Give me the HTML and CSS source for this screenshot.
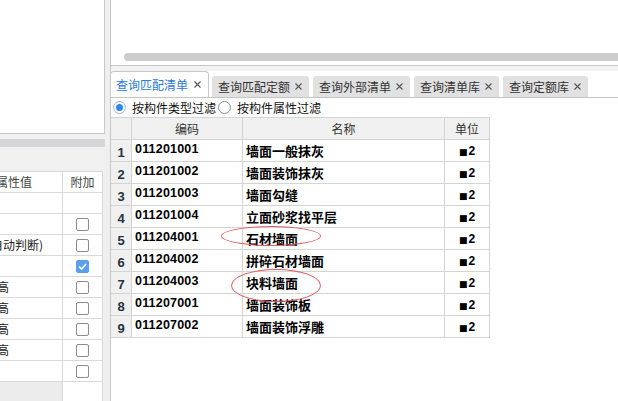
FILE: index.html
```html
<!DOCTYPE html>
<html lang="zh-CN">
<head>
<meta charset="utf-8">
<title>查询匹配清单</title>
<link rel="stylesheet" href="styles.css">
</head>
<body>
<div class="app">
  <div class="left">
    <div class="left-top"></div>
    <div class="left-gap"></div>
    <div class="left-bar"></div>
    <div class="left-space"></div>
    <div class="prop">
      <div class="pc ph"><span class="off-a">属性值</span></div>
      <div class="pc ph c2">附加</div>

      <div class="pc"></div><div class="pc"></div>

      <div class="pc"></div><div class="pc chk"><span class="box"></span></div>

      <div class="pc"><span class="off-b">(自动判断)</span></div><div class="pc chk"><span class="box"></span></div>

      <div class="pc"></div><div class="pc chk"><span class="box on"><svg width="9" height="7" viewBox="0 0 9 7"><path d="M1 3.5 L3.5 6 L8 1" fill="none" stroke="#fff" stroke-width="1.6"/></svg></span></div>

      <div class="pc"><span class="off-c">层高</span></div><div class="pc chk"><span class="box"></span></div>
      <div class="pc"><span class="off-c">层高</span></div><div class="pc chk"><span class="box"></span></div>
      <div class="pc"><span class="off-c">层高</span></div><div class="pc chk"><span class="box"></span></div>
      <div class="pc"><span class="off-c">层高</span></div><div class="pc chk"><span class="box"></span></div>

      <div class="pc"></div><div class="pc chk"><span class="box"></span></div>

      <div class="pc pf1"></div><div class="pc pf2"></div>
    </div>
  </div>

  <div class="splitter"></div>

  <div class="right">
    <div class="rtop"><div class="hscroll"></div></div>
    <div class="band"></div>
    <div class="tabs">
      <div class="tab active"><span>查询匹配清单</span><svg class="x" width="7" height="7" viewBox="0 0 7 7"><path d="M0.5 0.5 L6.5 6.5 M6.5 0.5 L0.5 6.5" stroke="#555" stroke-width="1.1"/></svg></div>
      <div class="tab"><span>查询匹配定额</span><svg class="x" width="7" height="7" viewBox="0 0 7 7"><path d="M0.5 0.5 L6.5 6.5 M6.5 0.5 L0.5 6.5" stroke="#555" stroke-width="1.1"/></svg></div>
      <div class="tab"><span>查询外部清单</span><svg class="x" width="7" height="7" viewBox="0 0 7 7"><path d="M0.5 0.5 L6.5 6.5 M6.5 0.5 L0.5 6.5" stroke="#555" stroke-width="1.1"/></svg></div>
      <div class="tab"><span>查询清单库</span><svg class="x" width="7" height="7" viewBox="0 0 7 7"><path d="M0.5 0.5 L6.5 6.5 M6.5 0.5 L0.5 6.5" stroke="#555" stroke-width="1.1"/></svg></div>
      <div class="tab"><span>查询定额库</span><svg class="x" width="7" height="7" viewBox="0 0 7 7"><path d="M0.5 0.5 L6.5 6.5 M6.5 0.5 L0.5 6.5" stroke="#555" stroke-width="1.1"/></svg></div>
    </div>
    <div class="filter">
      <span class="radio on"><span class="dot"></span></span><span class="rlabel">按构件类型过滤</span>
      <span class="radio"></span><span class="rlabel">按构件属性过滤</span>
    </div>
    <div class="grid">
      <div class="gc gh"></div><div class="gc gh">编码</div><div class="gc gh">名称</div><div class="gc gh">单位</div>

      <div class="gc gn">1</div><div class="gc gcode">011201001</div><div class="gc gname">墙面一般抹灰</div><div class="gc gunit"><span class="sq">■</span>2</div>
      <div class="gc gn">2</div><div class="gc gcode">011201002</div><div class="gc gname">墙面装饰抹灰</div><div class="gc gunit"><span class="sq">■</span>2</div>
      <div class="gc gn">3</div><div class="gc gcode">011201003</div><div class="gc gname">墙面勾缝</div><div class="gc gunit"><span class="sq">■</span>2</div>
      <div class="gc gn">4</div><div class="gc gcode">011201004</div><div class="gc gname">立面砂浆找平层</div><div class="gc gunit"><span class="sq">■</span>2</div>
      <div class="gc gn">5</div><div class="gc gcode">011204001</div><div class="gc gname">石材墙面</div><div class="gc gunit"><span class="sq">■</span>2</div>
      <div class="gc gn">6</div><div class="gc gcode">011204002</div><div class="gc gname">拼碎石材墙面</div><div class="gc gunit"><span class="sq">■</span>2</div>
      <div class="gc gn">7</div><div class="gc gcode">011204003</div><div class="gc gname">块料墙面</div><div class="gc gunit"><span class="sq">■</span>2</div>
      <div class="gc gn">8</div><div class="gc gcode">011207001</div><div class="gc gname">墙面装饰板</div><div class="gc gunit"><span class="sq">■</span>2</div>
      <div class="gc gn">9</div><div class="gc gcode">011207002</div><div class="gc gname">墙面装饰浮雕</div><div class="gc gunit"><span class="sq">■</span>2</div>
    </div>
  </div>

  <div class="mark m1"></div>
  <div class="mark m2"></div>
</div>
</body>
</html>
```

FILE: styles.css
```css
* { box-sizing: border-box; }
html, body { margin: 0; padding: 0; }
body {
  width: 618px;
  height: 401px;
  overflow: hidden;
  background: #fff;
  font-family: "Noto Sans CJK SC", "Noto Sans", sans-serif;
  font-size: 12px;
  color: #333;
}
.app {
  position: relative;
  display: flex;
  width: 618px;
  height: 401px;
}

/* left column */
.left {
  width: 105px;
  flex: none;
  display: flex;
  flex-direction: column;
  background: #f0f0f0;
}
.left-top {
  height: 134px;
  background: #fff;
  border-right: 1px solid #c8c8c8;
  border-bottom: 1px solid #c8c8c8;
}
.left-gap { height: 5px; }
.left-bar { height: 8px; background: #d6d6da; }
.left-space { height: 24px; }
.prop {
  width: 103px;
  flex: 1;
  display: grid;
  grid-template-columns: 63px 40px;
  grid-template-rows: repeat(10, 21px) 1fr;
  border-top: 1px solid #d6d6d6;
  background: #fff;
}
.pc {
  border-right: 1px solid #d9d9d9;
  border-bottom: 1px solid #d9d9d9;
  display: flex;
  align-items: center;
  overflow: hidden;
  white-space: nowrap;
  line-height: 1;
  color: #222;
}
.ph { color: #444; }
.c2 { justify-content: center; }
.chk { justify-content: center; }
.pf1 { background: #ececec; border-bottom: none; }
.pf2 { border-bottom: none; }
.off-a { margin-left: -4px; }
.off-b { margin-left: -13px; }
.off-c { margin-left: -15px; }
.box {
  width: 13px;
  height: 13px;
  border: 1px solid #8c8c8c;
  border-radius: 2px;
  background: #fff;
}
.box.on {
  background: #5b9ff0;
  border-color: #5b9ff0;
  display: flex;
  align-items: center;
  justify-content: center;
}

.splitter { width: 5px; flex: none; background: #efefef; }

/* right column */
.right {
  flex: 1;
  min-width: 0;
  border-left: 1px solid #c6c6c6;
  display: flex;
  flex-direction: column;
  background: #fff;
}
.rtop {
  height: 66px;
  flex: none;
  border-bottom: 1px solid #c8c8c8;
  display: flex;
  align-items: flex-end;
  padding: 0 0 4px 13px;
}
.hscroll {
  height: 8px;
  flex: 1;
  background: #cdcdcd;
  border-radius: 4px 0 0 4px;
}
.band { height: 5px; flex: none; background: #f2f2f2; }
.tabs {
  height: 27px;
  flex: none;
  display: flex;
  align-items: flex-end;
  gap: 4px;
  border-bottom: 1px solid #c4c4c4;
}
.tab {
  height: 21px;
  display: flex;
  align-items: center;
  gap: 5px;
  padding: 0 7px 0 6px;
  background: #e1e1e1;
  border-radius: 3px 3px 0 0;
  color: #333;
  white-space: nowrap;
  line-height: 1;
}
.tab.active {
  height: 26px;
  background: #fff;
  border: 1px solid #c8c8c8;
  border-bottom: none;
  border-radius: 4px 4px 0 0;
  padding-left: 5px;
  gap: 6px;
  margin-left: -1px;
  margin-right: -1px;
  color: #2a7ae2;
}
.x { flex: none; display: block; }

.filter {
  height: 19px;
  flex: none;
  display: flex;
  align-items: center;
  padding-left: 2px;
  color: #111;
  line-height: 1;
}
.radio {
  width: 13px;
  height: 13px;
  flex: none;
  border-radius: 50%;
  border: 1px solid #8c8c8c;
  background: #fff;
  display: flex;
  align-items: center;
  justify-content: center;
}
.radio.on { border-color: #9cb6d6; }
.dot { width: 7px; height: 7px; border-radius: 50%; background: #2f87e8; }
.rlabel { margin: 0 2px 0 6px; }

.grid {
  width: 379px;
  display: grid;
  grid-template-columns: 21px 111px 202px 45px;
  grid-template-rows: repeat(10, 22px);
  border-top: 1px solid #d4d4d4;
}
.gc {
  border-right: 1px solid #d4d4d4;
  border-bottom: 1px solid #d4d4d4;
  display: flex;
  align-items: center;
  white-space: nowrap;
  overflow: hidden;
  line-height: 1;
}
.gh { background: #f0f0f0; justify-content: center; color: #333; }
.gn {
  background: #f0f0f0;
  justify-content: center;
  font-family: "Liberation Sans", sans-serif;
  font-weight: bold;
  font-size: 13px;
  color: #25323f;
  padding-top: 3px;
}
.gcode {
  font-family: "Liberation Sans", sans-serif;
  font-weight: bold;
  font-size: 12.5px;
  color: #000;
  padding: 0 0 2px 3px;
  letter-spacing: 0.2px;
}
.gname {
  font-weight: bold;
  font-size: 13px;
  color: #000;
  padding-left: 3px;
}
.gunit {
  justify-content: center;
  align-items: baseline;
  padding-top: 5px;
  font-family: "Liberation Sans", sans-serif;
  font-weight: bold;
  font-size: 12px;
  color: #000;
}
.sq { font-family: "DejaVu Sans", sans-serif; font-size: 9px; margin-right: 1px; }

/* red annotation ellipses */
.mark {
  position: absolute;
  border: 1px solid #e35b5f;
  border-radius: 50%;
}
.m1 { left: 221px; top: 226px; width: 100px; height: 20px; }
.m2 { left: 231px; top: 269px; width: 90px; height: 33px; }
```
